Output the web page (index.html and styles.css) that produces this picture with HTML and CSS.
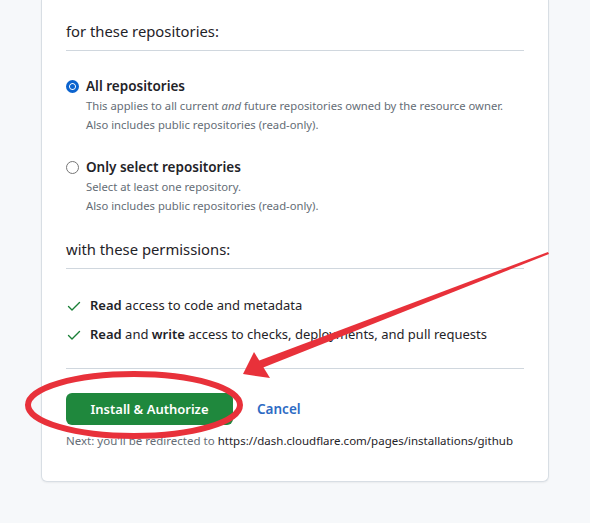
FILE: index.html
```html
<!DOCTYPE html>
<html lang="en">
<head>
<meta charset="utf-8">
<title>Install & Authorize</title>
<link rel="stylesheet" href="styles.css">
</head>
<body>
<div class="page">
  <div class="card">
    <h3 class="section-title">for these repositories:</h3>
    <div class="options">
      <label class="option">
        <span class="radio radio-checked"></span>
        <span class="option-body">
          <span class="option-label">All repositories</span>
          <span class="note">This applies to all current <em>and</em> future repositories owned by the resource owner.</span>
          <span class="note">Also includes public repositories (read-only).</span>
        </span>
      </label>
      <label class="option">
        <span class="radio"></span>
        <span class="option-body">
          <span class="option-label">Only select repositories</span>
          <span class="note">Select at least one repository.</span>
          <span class="note">Also includes public repositories (read-only).</span>
        </span>
      </label>
    </div>
    <h3 class="section-title">with these permissions:</h3>
    <ul class="perms">
      <li class="perm">
        <svg class="check" width="16" height="16" viewBox="0 0 16 16"><path d="M2.5 8.5l3.5 3.5 7.5-7.5" fill="none" stroke="#1a7f37" stroke-width="1.4" stroke-linecap="round" stroke-linejoin="round"/></svg>
        <span><strong>Read</strong> access to code and metadata</span>
      </li>
      <li class="perm">
        <svg class="check" width="16" height="16" viewBox="0 0 16 16"><path d="M2.5 8.5l3.5 3.5 7.5-7.5" fill="none" stroke="#1a7f37" stroke-width="1.4" stroke-linecap="round" stroke-linejoin="round"/></svg>
        <span><strong>Read</strong> and <strong>write</strong> access to checks, deployments, and pull requests</span>
      </li>
    </ul>
    <div class="actions">
      <button class="btn-primary" type="button">Install &amp; Authorize</button>
      <a class="cancel" href="#">Cancel</a>
    </div>
    <p class="next">Next: you'll be redirected to <span class="url">https://dash.cloudflare.com/pages/installations/github</span></p>
  </div>
  <svg class="annotation" width="590" height="523" viewBox="0 0 590 523">
    <ellipse cx="134" cy="405" rx="106" ry="31" fill="none" stroke="#e8313a" stroke-width="6"/>
    <polygon points="548,252 549,254 262,368 258,361" fill="#e8313a"/>
    <polygon points="243,374 254,352 270,378" fill="#e8313a"/>
  </svg>
</div>
</body>
</html>
```
FILE: styles.css
```css
html, body {
  margin: 0;
  padding: 0;
  background: #f6f8fa;
}
body {
  font-family: "Noto Sans", "Liberation Sans", sans-serif;
  color: #1f2328;
}
.page {
  position: relative;
  width: 590px;
  height: 523px;
  overflow: hidden;
}
.card {
  width: 458px;
  margin: 0 0 0 41px;
  padding: 18px 24px 31px;
  background: #fff;
  border: 1px solid #d8dee4;
  border-top: none;
  border-radius: 0 0 6px 6px;
  box-shadow: 0 1px 2px rgba(31,35,40,0.06);
}
.section-title {
  margin: 0;
  padding-bottom: 6px;
  font-size: 14.8px;
  font-weight: 400;
  line-height: 26px;
  border-bottom: 1px solid #d0d7de;
}
.options {
  display: flex;
  flex-direction: column;
  gap: 24px;
  padding: 26px 0 21px;
}
.option {
  display: flex;
  gap: 7px;
  align-items: flex-start;
}
.radio {
  box-sizing: border-box;
  flex: none;
  width: 13px;
  height: 13px;
  margin-top: 3px;
  border-radius: 50%;
  border: 1px solid #767676;
  background: #fff;
}
.radio-checked {
  border: 3px solid #0b63ce;
  box-shadow: inset 0 0 0 1px #fff;
  background: #0b63ce;
}
.option-body {
  display: flex;
  flex-direction: column;
}
.option-label {
  font-size: 13.5px;
  font-weight: 600;
  line-height: 19px;
}
.note {
  font-size: 11.25px;
  line-height: 19px;
  color: #656d76;
}
.note em {
  font-style: italic;
}
.perms {
  list-style: none;
  margin: 0;
  padding: 26px 0 23px;
  border-bottom: 1px solid #d0d7de;
  display: flex;
  flex-direction: column;
  gap: 8px;
}
.perm {
  display: flex;
  align-items: center;
  gap: 8px;
  font-size: 13px;
  line-height: 21px;
}
.perm strong {
  font-weight: 600;
}
.check {
  flex: none;
}
.actions {
  display: flex;
  align-items: center;
  gap: 24px;
  padding-top: 24px;
}
.btn-primary {
  width: 167px;
  height: 32px;
  border: none;
  border-radius: 6px;
  background: #1f883d;
  color: #fff;
  font-family: inherit;
  font-size: 13px;
  font-weight: 600;
}
.cancel {
  color: #2d6bc4;
  font-size: 13.5px;
  font-weight: 600;
  text-decoration: none;
}
.next {
  margin: 7px 0 0;
  font-size: 11.5px;
  line-height: 18px;
  color: #656d76;
}
.url {
  color: #1f2328;
}
.annotation {
  position: absolute;
  left: 0;
  top: 0;
  pointer-events: none;
}
```
